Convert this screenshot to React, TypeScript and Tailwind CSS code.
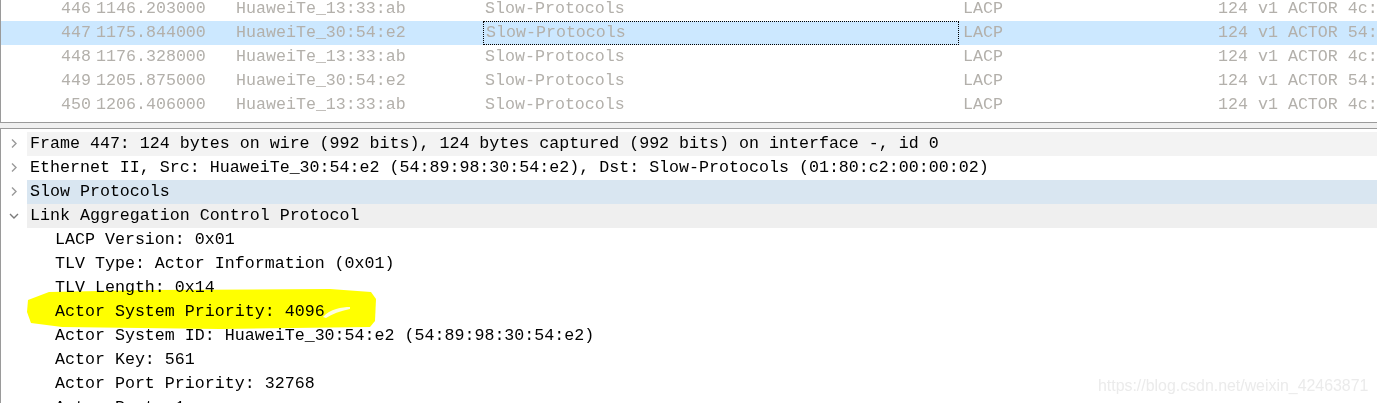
import React from 'react';

const mono = { fontFamily: '"Liberation Mono", "DejaVu Sans Mono", monospace' };

type Packet = { no: string; time: string; src: string; dst: string; proto: string; info: string };

const packets: Packet[] = [
  { no: '446', time: '1146.203000', src: 'HuaweiTe_13:33:ab', dst: 'Slow-Protocols', proto: 'LACP', info: '124 v1 ACTOR 4c:1f:cc:13:33:ab P: 1 K: 561 *F***A** PARTNER' },
  { no: '447', time: '1175.844000', src: 'HuaweiTe_30:54:e2', dst: 'Slow-Protocols', proto: 'LACP', info: '124 v1 ACTOR 54:89:98:30:54:e2 P: 1 K: 561 *F***A** PARTNER' },
  { no: '448', time: '1176.328000', src: 'HuaweiTe_13:33:ab', dst: 'Slow-Protocols', proto: 'LACP', info: '124 v1 ACTOR 4c:1f:cc:13:33:ab P: 1 K: 561 *F***A** PARTNER' },
  { no: '449', time: '1205.875000', src: 'HuaweiTe_30:54:e2', dst: 'Slow-Protocols', proto: 'LACP', info: '124 v1 ACTOR 54:89:98:30:54:e2 P: 1 K: 561 *F***A** PARTNER' },
  { no: '450', time: '1206.406000', src: 'HuaweiTe_13:33:ab', dst: 'Slow-Protocols', proto: 'LACP', info: '124 v1 ACTOR 4c:1f:cc:13:33:ab P: 1 K: 561 *F***A** PARTNER' },
];

function Chevron({ open }: { open?: boolean }) {
  return (
    <svg width="26" height="24" viewBox="0 0 26 24" className="shrink-0">
      {open ? (
        <path d="M9 10 L13 14 L17 10" fill="none" stroke="#7a7a7a" strokeWidth="1.4" />
      ) : (
        <path d="M11 7.5 L15 11.5 L11 15.5" fill="none" stroke="#9a9a9a" strokeWidth="1.4" />
      )}
    </svg>
  );
}

function TreeRow({ text, open, bg }: { text: string; open?: boolean; bg?: string }) {
  return (
    <div className="flex h-[24px] items-center">
      <Chevron open={open} />
      <div className={`flex-1 h-full pl-[3px] leading-[24px] whitespace-nowrap ${bg ?? ''}`}>{text}</div>
    </div>
  );
}

function Field({ text }: { text: string }) {
  return <div className="h-[24px] pl-[54px] leading-[24px] whitespace-nowrap">{text}</div>;
}

export default function App() {
  return (
    <div className="relative w-[1377px] h-[403px] overflow-hidden bg-[#f0f0f0] text-[16.65px]" style={mono}>
      {/* Packet list */}
      <div className="h-[123px] bg-white border-l border-b border-[#9a9a9a] overflow-hidden text-[#b3b0ab]">
        <div className="mt-[-3px]">
          {packets.map((p) => {
            const sel = p.no === '447';
            return (
              <div key={p.no} className={`flex h-[24px] leading-[24px] whitespace-nowrap ${sel ? 'bg-[#cce8ff]' : ''}`}>
                <div className="w-[91px] text-right pr-[1px]">{p.no}</div>
                <div className="w-[142px] pl-[4px]">{p.time}</div>
                <div className="w-[249px] pl-[2px]">{p.src}</div>
                <div className={`w-[476px] pl-[2px] ${sel ? 'border border-dotted border-black leading-[22px] pl-[1px]' : ''}`}>{p.dst}</div>
                <div className="w-[255px] pl-[4px]">{p.proto}</div>
                <div className="flex-1 pl-[4px] overflow-hidden">{p.info}</div>
              </div>
            );
          })}
        </div>
      </div>

      {/* Packet details */}
      <div className="relative mt-[5px] h-[300px] bg-white border-l border-t border-[#9a9a9a] pt-[3px] text-black">
        <TreeRow text="Frame 447: 124 bytes on wire (992 bits), 124 bytes captured (992 bits) on interface -, id 0" bg="bg-[#f3f3f3]" />
        <TreeRow text="Ethernet II, Src: HuaweiTe_30:54:e2 (54:89:98:30:54:e2), Dst: Slow-Protocols (01:80:c2:00:00:02)" />
        <TreeRow text="Slow Protocols" bg="bg-[#d9e6f1]" />
        <TreeRow text="Link Aggregation Control Protocol" open bg="bg-[#efefef]" />
        <Field text="LACP Version: 0x01" />
        <Field text="TLV Type: Actor Information (0x01)" />
        <Field text="TLV Length: 0x14" />
        <Field text="Actor System Priority: 4096" />
        <Field text="Actor System ID: HuaweiTe_30:54:e2 (54:89:98:30:54:e2)" />
        <Field text="Actor Key: 561" />
        <Field text="Actor Port Priority: 32768" />
        <Field text="Actor Port: 1" />

        {/* hand-drawn highlighter mark */}
        <svg
          className="absolute left-[-1px] top-[-129px] pointer-events-none mix-blend-multiply"
          width="400"
          height="403"
          viewBox="0 0 400 403"
        >
          <path
            d="M49 292 L150 290 L330 289 L371 292 L376 299 L375 321 L370 327 L220 329 L62 327 L31 323 L27 312 L28 300 Z"
            fill="#ffff00"
          />
          <path d="M323 317 C330 309 342 307 350 307 L350 309 C340 311 332 314 326 318 Z" fill="#fdfde0" />
        </svg>
      </div>

      {/* watermark */}
      <div
        className="absolute left-[1098px] top-[374px] text-[15.9px] text-[#ebebeb] whitespace-nowrap"
        style={{ fontFamily: '"Liberation Sans", Arial, sans-serif' }}
      >
        https://blog.csdn.net/weixin_42463871
      </div>
    </div>
  );
}
